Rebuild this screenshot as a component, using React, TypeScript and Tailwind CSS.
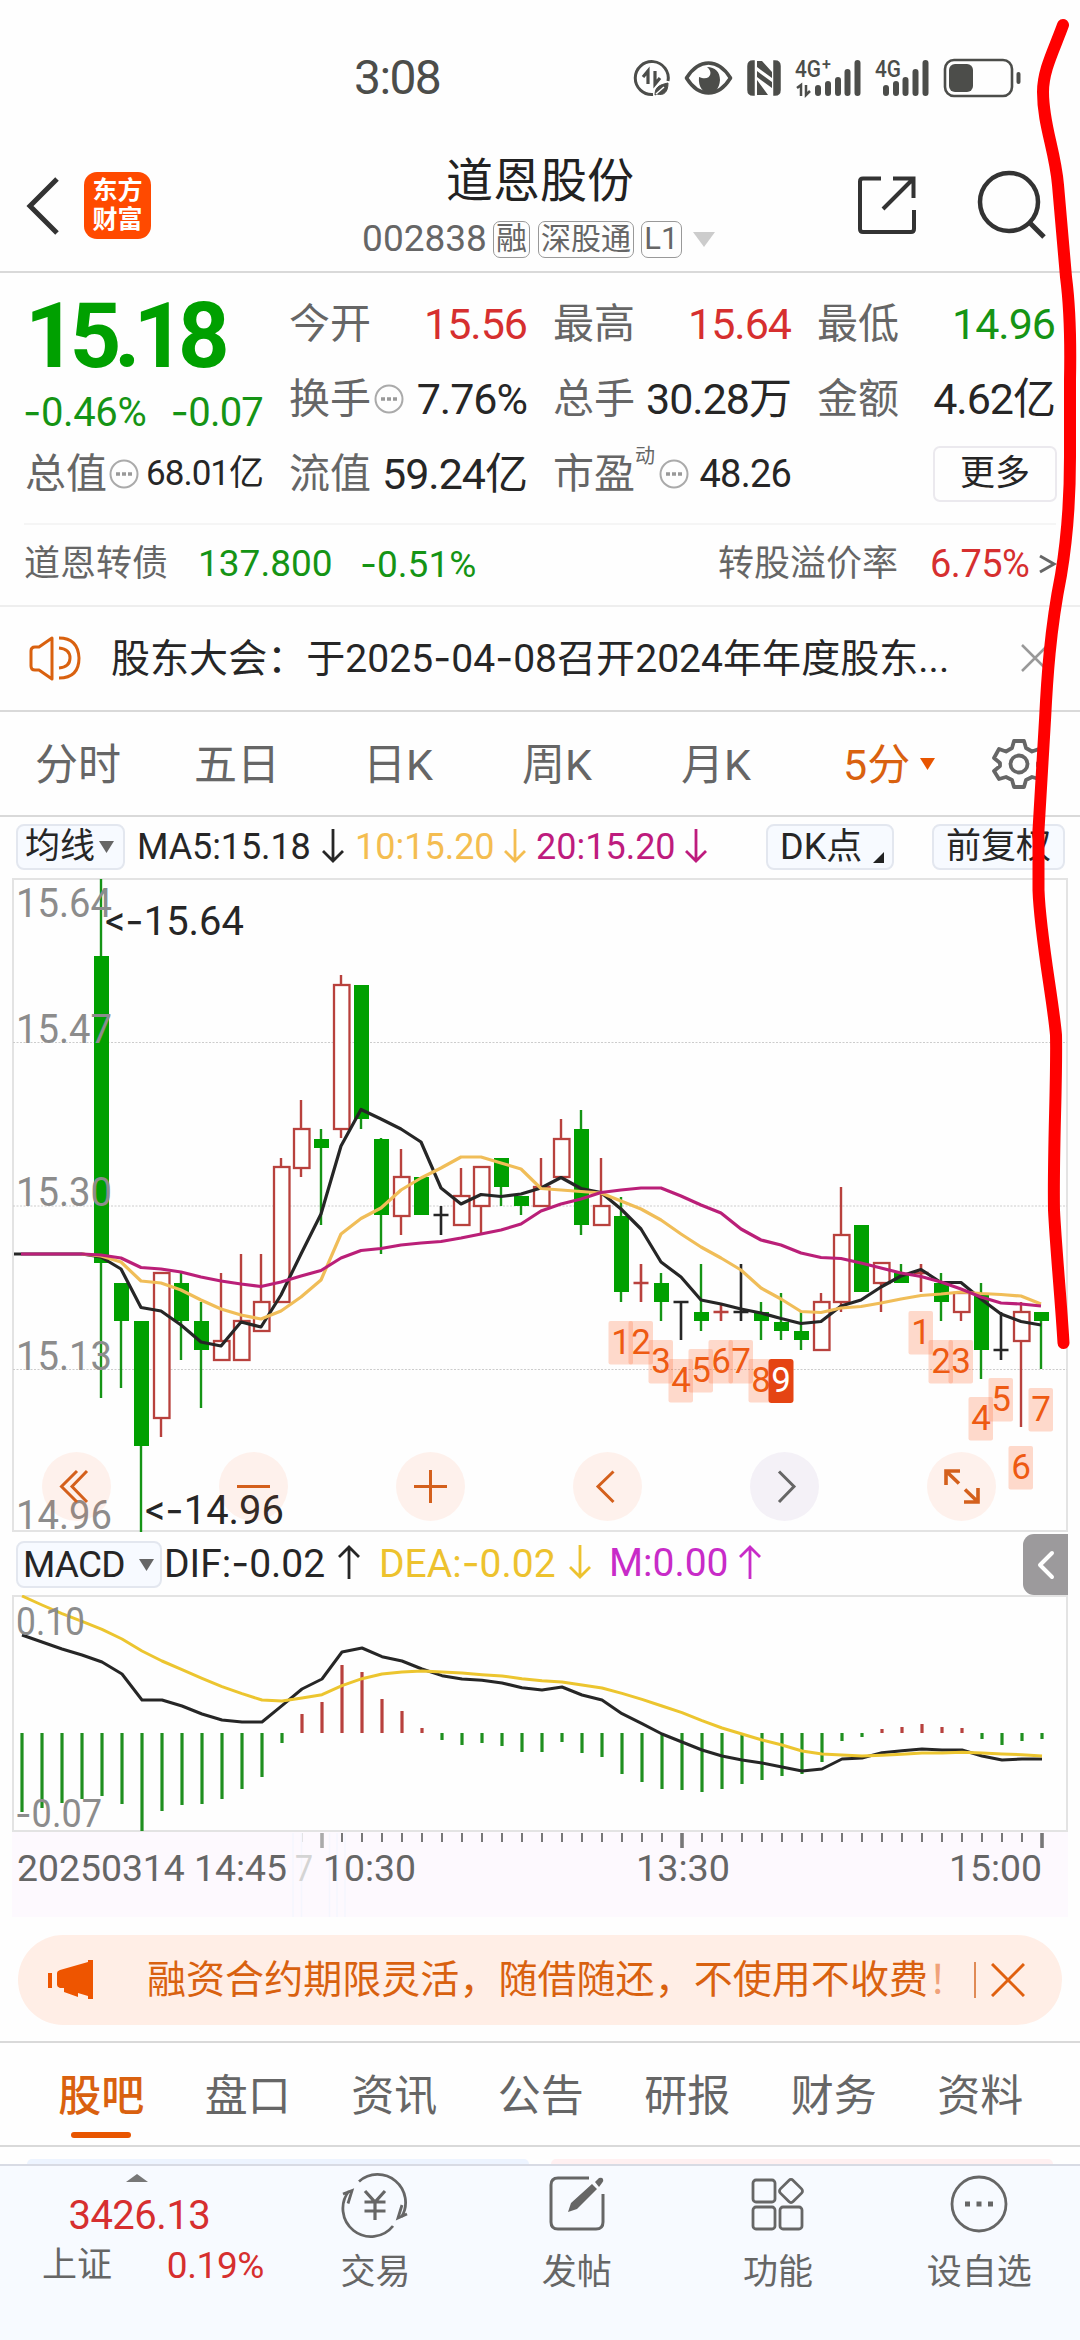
import React from 'react';

type Pt = [number, number];
type Kind = 'G' | 'R' | 'K';
type Candle = [Kind, number, number, number, number];

const GREEN = '#00a000';
const RED = '#b8413d';
const INK = '#262626';

// kind, body top, body bottom, high, low
const candles: Candle[] = [
  ['G', 956, 1263, 879, 1398], ['G', 1283, 1321, 1283, 1388], ['G', 1321, 1446, 1321, 1532], ['R', 1273, 1418, 1273, 1437],
  ['G', 1283, 1321, 1273, 1360], ['G', 1321, 1350, 1302, 1408], ['R', 1341, 1360, 1273, 1360], ['R', 1321, 1360, 1254, 1360],
  ['R', 1302, 1331, 1254, 1331], ['R', 1167, 1302, 1158, 1302], ['R', 1129, 1168, 1100, 1177], ['G', 1139, 1148, 1129, 1225],
  ['R', 985, 1129, 975, 1138], ['G', 985, 1119, 985, 1129], ['G', 1139, 1215, 1138, 1254], ['R', 1177, 1216, 1149, 1235],
  ['G', 1177, 1215, 1177, 1215], ['K', 1215, 1215, 1206, 1235], ['R', 1196, 1225, 1168, 1225], ['R', 1167, 1206, 1167, 1233],
  ['G', 1158, 1187, 1158, 1206], ['G', 1196, 1206, 1196, 1215], ['R', 1187, 1206, 1158, 1206], ['R', 1139, 1177, 1119, 1177],
  ['G', 1129, 1225, 1110, 1235], ['R', 1206, 1225, 1158, 1225], ['G', 1216, 1292, 1197, 1302], ['R', 1283, 1283, 1264, 1302],
  ['G', 1283, 1302, 1273, 1321], ['K', 1302, 1302, 1302, 1340], ['G', 1312, 1321, 1264, 1331], ['R', 1312, 1312, 1304, 1321],
  ['K', 1312, 1312, 1264, 1321], ['G', 1312, 1321, 1302, 1340], ['G', 1322, 1331, 1293, 1340], ['G', 1331, 1340, 1312, 1350],
  ['R', 1302, 1350, 1293, 1350], ['R', 1235, 1302, 1187, 1312], ['G', 1225, 1292, 1225, 1292], ['R', 1263, 1283, 1263, 1312],
  ['G', 1273, 1283, 1264, 1283], ['R', 1273, 1273, 1264, 1292], ['G', 1283, 1302, 1273, 1321], ['R', 1293, 1312, 1293, 1321],
  ['G', 1293, 1350, 1283, 1379], ['K', 1350, 1350, 1312, 1360], ['R', 1312, 1341, 1302, 1427], ['G', 1312, 1321, 1312, 1369],
];

const ma5 = [
  1257, 1269, 1307.5, 1311, 1325, 1342, 1346, 1322, 1327, 1295, 1254, 1214, 1146, 1109.5, 1119, 1129, 1142, 1188, 1204, 1194.5,
  1196.5, 1194, 1188, 1177.5, 1188.5, 1192.5, 1209, 1229, 1262, 1277, 1300, 1304, 1309, 1313, 1318.5, 1323.5, 1321.5, 1306,
  1300, 1287, 1276, 1269.5, 1282.5, 1282.5, 1299, 1314, 1321.5, 1325,
];
const ma10 = [
  1256, 1262, 1281, 1283, 1290, 1300, 1309, 1315, 1319, 1311, 1297, 1280, 1234, 1218.5, 1208, 1190, 1178, 1168, 1157, 1157,
  1163, 1169, 1188.5, 1190, 1191.5, 1193, 1201, 1209, 1220, 1234, 1247, 1258, 1270, 1288, 1299, 1311.5, 1312.5, 1308, 1306.5,
  1303, 1299, 1295.5, 1294, 1292, 1293.5, 1294.5, 1296, 1304,
];
const ma20 = [
  1255, 1258, 1267.5, 1269, 1272, 1277, 1281, 1284, 1286.5, 1282, 1276, 1270.5, 1258, 1250.5, 1248.5, 1245, 1243, 1241.5,
  1238, 1234, 1230, 1224, 1211, 1204, 1199, 1192.5, 1190, 1188, 1188, 1196, 1205, 1213, 1229, 1240, 1245, 1253, 1257.5,
  1258.5, 1263, 1268, 1273, 1276.5, 1282, 1289, 1297, 1303, 1304, 1306,
];

const line = (ys: number[], x0: number, start: Pt[] = []) =>
  [...start, ...ys.map((y, i): Pt => [x0 + i * 20, y])].map((p) => p.join(',')).join(' ');

const marks: [string, number, number][] = [
  ['1', 621, 1321], ['2', 641, 1321], ['3', 661, 1340], ['4', 681, 1359], ['5', 701, 1349], ['6', 721, 1340], ['7', 741, 1340],
  ['8', 761, 1359], ['1', 921, 1311], ['2', 941, 1340], ['3', 961, 1340], ['4', 981, 1397], ['5', 1001, 1378], ['6', 1021, 1446],
  ['7', 1041, 1388],
];

const macdEnds = [
  1812, 1808, 1803, 1799, 1796, 1804, 1831, 1811, 1805, 1804, 1799, 1789, 1777, 1743, 1714, 1702, 1665, 1672, 1699, 1711, 1728,
  1740, 1745, 1743, 1746, 1752, 1752, 1742, 1753, 1757, 1774, 1782, 1789, 1790, 1792, 1789, 1784, 1780, 1776, 1774, 1762, 1741,
  1737, 1729, 1727, 1724, 1727, 1728, 1739, 1745, 1741, 1739,
];
const dif = [
  345, 366, 387, 405, 426, 462, 540, 540, 558, 582, 600, 606, 606, 557, 507, 477, 396, 384, 410, 423, 447, 467, 477, 481, 489,
  503, 510, 501, 525, 540, 581, 611, 642, 666, 690, 708, 720, 729, 741, 753, 747, 717, 714, 698, 692, 687, 690, 690, 708, 720,
  717, 717,
].map((v) => 1520 + v / 3);
const dea = [
  228, 255, 281, 304, 328, 357, 393, 423, 449, 475, 500, 521, 540, 543, 534, 524, 497, 476, 462, 456, 453, 456, 459, 464, 468,
  476, 482, 486, 495, 504, 520, 538, 558, 578, 602, 624, 642, 660, 675, 693, 702, 705, 708, 706, 703, 699, 699, 697, 699, 702,
  704, 708,
].map((v) => 1520 + v / 3);

// Hyphens are set in Inter, whose dash is wider and sits higher than Roboto's.
function Num({ children }: { children: string }) {
  return (
    <>
      {children.split(/(-)/).map((part, i) => (part === '-' ? <span key={i} className="font-[Inter]">-</span> : part))}
    </>
  );
}

function Label({ x, y, w, size = 40, fill = '#8c8c8c', children }: { x: number; y: number; w: number; size?: number; fill?: string; children: string }) {
  return (
    <text x={x} y={y} textLength={w} lengthAdjust="spacingAndGlyphs" fontSize={size} fill={fill}>
      {children.split(/(-)/).map((part, i) => (part === '-' ? <tspan key={i} className="font-[Inter]">-</tspan> : part))}
    </text>
  );
}

function StatusBar() {
  return (
    <div className="flex h-[104px] items-end pb-1 text-[#4c4d4a]">
      <span className="ml-[354px] h-[46px] w-[88px] text-[48px] leading-[48px] tracking-[-1.6px] whitespace-nowrap">3:08</span>
      <svg className="ml-[190px] h-[44px] w-[392px]" viewBox="632 56 392 44" fill="none" stroke="#4c4d4a">
        <path d="M668 81A16.5 16.5 0 1 0 653 94.500" strokeWidth="3" />
        <path d="M643 77l5-6v13M655 71v13l5-6" strokeWidth="3.200" />
        <path d="M655 95c0-8 4-10 13-12 0 9-4 13-11 11z" fill="#4c4d4a" strokeWidth="1" />
        <path d="M656 94l8-7" stroke="#fff" strokeWidth="1.500" />
        <path d="M686.500 78C699 58 718 58 730.500 78 718 98 699 98 686.500 78z" strokeWidth="3.600" strokeLinejoin="round" />
        <path d="M707 67c7 5 3 15-8 10-2 20 20 22 21 3 0-8-5-13-13-13z" fill="#4c4d4a" stroke="none" />
        <path d="M754 61h-1q-5 0-5 5v24q0 5 5 5h1zM774 61h1q5 0 5 5v24q0 5-5 5h-1z" fill="#4c4d4a" strokeWidth="1.500" />
        <path d="M757 61h5l10 11v6l-15-11zM757 71l15 11v6l-15-11zM757 80l11 15h-11z" fill="#4c4d4a" stroke="none" />
        <g fill="#4c4d4a" stroke="none" fontSize="23" fontWeight="500">
          <text x="795" y="77" textLength="26" lengthAdjust="spacingAndGlyphs">4G</text>
          <text x="822" y="70" fontSize="16">+</text>
          <text x="875" y="77" textLength="26" lengthAdjust="spacingAndGlyphs">4G</text>
        </g>
        <path d="M797 88l4-3v11M806 85v10l4-4" strokeWidth="2.500" />
        <path d="M818 88v5M828 84v9M838 80v13M847.500 72v21M857.500 63v30M886 88v5M896 84v9M905.500 80v13M915.500 72v21M925.500 63v30" strokeWidth="6" strokeLinecap="round" />
        <rect x="945" y="60" width="67" height="36" rx="9" strokeWidth="2.600" />
        <rect x="949" y="64" width="24" height="28" rx="6" fill="#4c4d4a" stroke="none" />
        <path d="M1018.500 74v8" strokeWidth="4" strokeLinecap="round" />
      </svg>
    </div>
  );
}

function Header() {
  return (
    <header className="relative flex h-[169px] items-start justify-between border-b-2 border-[#d9d9d9] pl-[24px] pr-[33px]">
      <div className="flex items-center pt-[67px]">
        <svg className="h-[68px] w-[40px]" viewBox="0 0 40 68" fill="none" stroke="#333" strokeWidth="5">
          <path d="M33 8L6 35l27 27" />
        </svg>
        <div className="ml-[20px] flex size-[67px] flex-col items-center justify-center rounded-[13px] bg-[#ff4a00] text-[25px] leading-[29px] font-bold text-white">
          <span>东方</span>
          <span>财富</span>
        </div>
      </div>
      <div className="absolute top-[49px] left-1/2 flex w-[420px] -translate-x-1/2 flex-col items-center">
        <h1 className="text-[47px] leading-[56px] text-[#222]">道恩股份</h1>
        <div className="mt-[10px] ml-[-3px] flex items-center text-[#666]">
          <span className="text-[37px] leading-[40px]">002838</span>
          <span className="ml-[6px] flex h-[37px] items-center rounded-[7px] border-[1.5px] border-[#999] px-[2px] text-[31px] leading-[32px]">融</span>
          <span className="ml-[8px] flex h-[37px] items-center rounded-[7px] border-[1.5px] border-[#999] px-[2px] text-[30px] leading-[32px]">深股通</span>
          <span className="ml-[7px] flex h-[37px] w-[41px] items-center justify-center rounded-[7px] border-[1.5px] border-[#999] text-[31px] leading-[32px]">L1</span>
          <svg className="ml-[11px] h-[15px] w-[22px]" viewBox="0 0 22 15"><path d="M0 0h22L11 15z" fill="#ccc" /></svg>
        </div>
      </div>
      <svg className="mt-[70px] h-[66px] w-[190px] overflow-visible" viewBox="857 174 190 66" fill="none" stroke="#333" strokeWidth="4">
        <path d="M881 178.500H863q-3 0-3 3V229q0 3 3 3h48q3 0 3-3v-19M893 178.500h20.500V198M913 179l-30 30" />
        <circle cx="1009" cy="202" r="29" strokeWidth="4.500" />
        <path d="M1030 223l14 14" strokeWidth="5" />
      </svg>
    </header>
  );
}

function Dots({ className = '' }: { className?: string }) {
  return (
    <svg className={`size-[30px] ${className}`} viewBox="0 0 30 30">
      <circle cx="15" cy="15" r="13.500" fill="none" stroke="#aaa" strokeWidth="2" />
      <path d="M7 15h4M13 15h4M19 15h4" stroke="#999" strokeWidth="3.500" />
    </svg>
  );
}

function Cell({ label, value, color, extra }: { label: string; value: string; color: string; extra?: React.ReactNode }) {
  return (
    <div className="flex h-[75px] items-center justify-between whitespace-nowrap">
      <span className="flex items-center text-[41px] leading-[50px] text-[#666]">{label}{extra}</span>
      <span className={`text-[43px] leading-[50px] tracking-[-1px] ${color}`}>{value}</span>
    </div>
  );
}

function Stats() {
  return (
    <section>
      <div className="grid h-[250px] grid-cols-4 gap-x-[26px] px-[25px] pt-[13px]">
        <div className="whitespace-nowrap">
          <div className="flex h-[102px] items-center text-[90px] leading-[90px] font-bold tracking-[-7px] text-[#00a000]">15.18</div>
          <div className="flex h-[48px] items-center justify-between text-[40px] leading-[44px] text-[#159415]">
            <span className="ml-[-2px] tracking-[-0.4px]"><Num>-0.46%</Num></span>
            <span className="tracking-[-0.8px]"><Num>-0.07</Num></span>
          </div>
          <div className="flex h-[75px] items-center justify-between">
            <span className="flex items-center text-[41px] leading-[50px] text-[#666]">总值<Dots className="ml-[2px]" /></span>
            <span className="text-[35px] leading-[50px] tracking-[-1px] text-[#262626]">68.01亿</span>
          </div>
        </div>
        <div>
          <Cell label="今开" value="15.56" color="text-[#d62f2f]" />
          <Cell label="换手" value="7.76%" color="text-[#262626]" extra={<Dots className="ml-[3px]" />} />
          <Cell label="流值" value="59.24亿" color="text-[#262626]" />
        </div>
        <div>
          <Cell label="最高" value="15.64" color="text-[#d62f2f]" />
          <Cell label="总手" value="30.28万" color="text-[#262626]" />
          <div className="flex h-[75px] items-center justify-between whitespace-nowrap">
            <span className="flex items-center text-[41px] leading-[50px] text-[#666]">
              市盈<span className="-mt-[36px] text-[20px] leading-[20px]">动</span><Dots className="ml-[4px]" />
            </span>
            <span className="text-[38px] leading-[50px] tracking-[-0.8px] text-[#262626]">48.26</span>
          </div>
        </div>
        <div>
          <Cell label="最低" value="14.96" color="text-[#159415]" />
          <Cell label="金额" value="4.62亿" color="text-[#262626]" />
          <div className="-mr-[2px] flex h-[75px] items-center justify-end">
            <button className="flex h-[56px] w-[124px] items-center justify-center rounded-[7px] border-2 border-[#ebe9ee] text-[35px] leading-[40px] text-[#262626]">更多</button>
          </div>
        </div>
      </div>
      <div className="mx-[24px] h-[2px] bg-[#f5f5f5]" />
      <div className="flex h-[82px] items-center border-b-2 border-[#eeeeee] pr-[23px] pb-[2px] pl-[24px] text-[36px] leading-[44px] whitespace-nowrap">
        <span className="text-[#666]">道恩转债</span>
        <span className="ml-[30px] w-[162px] text-[37px] text-[#159415]">137.800</span>
        <span className="text-[37px] text-[#159415]"><Num>-0.51%</Num></span>
        <span className="ml-auto text-[#666]">转股溢价率</span>
        <span className="ml-[32px] w-[108px] text-[38px] tracking-[-0.5px] text-[#d62f2f]">6.75%</span>
        <svg className="h-[24px] w-[19px]" viewBox="0 0 19 24" fill="none" stroke="#666" strokeWidth="3"><path d="M2 4l14 8-14 8" /></svg>
      </div>
    </section>
  );
}

function Notice() {
  return (
    <section className="flex h-[105px] items-center border-b-2 border-[#d9d9d9] pb-[2px] pl-[28px]">
      <svg className="h-[50px] w-[54px]" viewBox="28 634 54 50" fill="none" stroke="#d9610f" strokeWidth="3">
        <path d="M52 639v41l-13-9h-4q-4 0-4-4v-15q0-4 4-4h4z" strokeLinejoin="round" />
        <path d="M59 639q19 0 20 20 0 20-20 20M59 649q11 1 11 10t-11 10" />
      </svg>
      <p className="mt-[2px] ml-[29px] w-[838px] text-[39px] leading-[50px] tracking-[0.05px] whitespace-nowrap text-[#262626]"><Num>股东大会：于2025-04-08召开2024年年度股东...</Num></p>
      <svg className="ml-[71px] size-[30px]" viewBox="0 0 30 30" stroke="#999" strokeWidth="2.500"><path d="M2 2l26 26M28 2L2 28" /></svg>
    </section>
  );
}

function PeriodTabs() {
  return (
    <nav className="flex h-[105px] items-center border-b-2 border-[#d9d9d9] text-[43px] leading-[50px] whitespace-nowrap text-[#666]">
      <span className="mt-[3px] ml-[35px] w-[159px]">分时</span>
      <span className="mt-[3px] w-[169px]">五日</span>
      <span className="mt-[3px] w-[159px]">日K</span>
      <span className="mt-[3px] w-[159px]">周K</span>
      <span className="mt-[3px] w-[162px]">月K</span>
      <span className="mt-[3px] flex w-[149px] items-center text-[#d9610f]">
        5分
        <svg className="-mt-[2px] ml-[10px] h-[12px] w-[15px]" viewBox="0 0 15 12"><path d="M0 0h15L7.500 12z" fill="#e85500" /></svg>
      </span>
      <svg className="h-[54px] w-[54px]" viewBox="-27 -27 54 54" fill="none" stroke="#666" strokeWidth="3.800" strokeLinejoin="round">
        <path d="M-5-23H5L7-16 13-12.500 20-15 25-6 19-1V2L25 7 20 15 13 13 7 16 5 23H-5L-7 16-13 13-20 15-25 7-19 2V-1L-25-6-20-15-13-12.500-7-16z" />
        <circle r="8.500" />
      </svg>
    </nav>
  );
}

function Arrow({ up = false, className = '' }: { up?: boolean; className?: string }) {
  return (
    <svg className={`h-[34px] w-[22px] ${className}`} viewBox="0 0 22 34" fill="none" stroke="currentColor" strokeWidth="2.800">
      <path d={up ? 'M11 34V2M1 12L11 2l10 10' : 'M11 0v32M1 22l10 10 10-10'} />
    </svg>
  );
}

function Caret() {
  return <svg className="h-[12px] w-[15px]" viewBox="0 0 15 12"><path d="M0 0h15L7.500 12z" fill="#666" /></svg>;
}

function MaBar() {
  return (
    <div className="flex h-[61px] items-start pt-[7px] pl-[16px] text-[36px] leading-[46px] whitespace-nowrap">
      <div className="flex h-[46px] w-[109px] items-center rounded-[8px] border-2 border-[#e3e7ef] bg-[#f7faff] pl-[7px] text-[35px] text-[#262626]">
        均线<span className="ml-[4px]"><Caret /></span>
      </div>
      <span className="ml-[12px] h-[46px] w-[185px] tracking-[-0.1px] text-[#262626]">MA5:15.18</span>
      <Arrow className="mt-[5px] text-[#262626]" />
      <span className="ml-[11px] w-[149px] text-[#f4bd50]">10:15.20</span>
      <Arrow className="mt-[5px] text-[#f4bd50]" />
      <span className="ml-[10px] w-[149px] text-[#be1b7d]">20:15.20</span>
      <Arrow className="mt-[5px] text-[#be1b7d]" />
      <div className="ml-[59px] flex h-[46px] w-[128px] items-center rounded-[8px] border-2 border-[#e3e7ef] bg-[#f7faff] pl-[12px] text-[36px] text-[#262626]">
        DK点
        <svg className="mt-[20px] ml-[11px] size-[11px]" viewBox="0 0 11 11"><path d="M11 0v11H0z" fill="#222" /></svg>
      </div>
      <div className="ml-[38px] flex h-[46px] w-[133px] items-center justify-center rounded-[8px] border-2 border-[#e3e7ef] bg-[#f7faff] text-[35px] text-[#262626]">前复权</div>
    </div>
  );
}

function CandleChart() {
  return (
    <svg className="block h-[654px] w-full overflow-visible" viewBox="0 878 1080 654">
      <rect x="13" y="879" width="1054" height="652" fill="none" stroke="#e3e3e3" strokeWidth="2" />
      {[1042.5, 1206, 1369.5].map((y) => (
        <path key={y} d={`M13 ${y}H1067`} stroke="#ccc" strokeWidth="1" strokeDasharray="2 1.500" />
      ))}
      {candles.map(([k, top, bottom, hi, lo], i) => {
        const x = 101 + i * 20;
        const color = k === 'G' ? '#159415' : k === 'R' ? RED : INK;
        if (top === bottom) {
          return <path key={i} d={`M${x - 7.5} ${top}h15M${x} ${hi}V${lo}`} stroke={color} strokeWidth="2.600" />;
        }
        return (
          <g key={i}>
            {hi < top && <path d={`M${x} ${hi}V${top}`} stroke={color} strokeWidth="2.400" />}
            {lo > bottom && <path d={`M${x} ${bottom}V${lo}`} stroke={color} strokeWidth="2.400" />}
            {k === 'G' ? (
              <rect x={x - 7} y={top} width="15" height={bottom - top} fill={GREEN} />
            ) : (
              <rect x={x - 7} y={top} width="15.500" height={bottom - top} fill="#fff" stroke={RED} strokeWidth="2.300" />
            )}
          </g>
        );
      })}
      <g fill="none" strokeWidth="3.200" strokeLinejoin="round">
        <polyline points={line(ma5, 101, [[14, 1254], [82, 1254]])} stroke={INK} />
        <polyline points={line(ma10, 101, [[82, 1254]])} stroke="#f0bd58" />
        <polyline points={line(ma20, 101, [[21, 1254], [82, 1254]])} stroke="#ba1f78" />
      </g>
      <Label x={16} y={917} w={96}>15.64</Label>
      <Label x={16} y={1043} w={96}>15.47</Label>
      <Label x={16} y={1206} w={96}>15.30</Label>
      <Label x={16} y={1370} w={96}>15.13</Label>
      <Label x={16} y={1529} w={96}>14.96</Label>
      <Label x={105} y={935} w={139} fill={INK}>{'<-15.64'}</Label>
      <Label x={145} y={1524} w={139} fill={INK}>{'<-14.96'}</Label>
      {marks.map(([t, x, y]) => (
        <g key={`${x}`}>
          <rect x={x - 12.5} y={y} width="24.500" height="43.500" rx="2" fill="#ff6a35" fillOpacity="0.25" />
          <text x={x} y={y + 33} textAnchor="middle" fontSize="35" fill="#ee5a12">{t}</text>
        </g>
      ))}
      <rect x="768.500" y="1359" width="25" height="44" rx="3" fill="#e54413" />
      <text x="781" y="1392" textAnchor="middle" fontSize="35" fill="#fff">9</text>
      {[76.5, 253.5, 430.5, 607.5, 784.5, 961.5].map((x, i) => (
        <circle key={x} cx={x} cy="1486.500" r="34.500" fill={i === 4 ? '#5a2a80' : '#ff5a14'} fillOpacity={i === 4 ? 0.06 : 0.08} />
      ))}
      <g fill="none" stroke="#d4601c" strokeWidth="3">
        <path d="M77 1471l-15.500 15.500 15.500 15.500M87 1471l-15 15.500 15 15.500M237 1486.500h33M414 1486.500h33M430.500 1470v33M613.500 1471.500l-15.500 15 15.500 15.500" />
        <path d="M946 1485v-14h14M947 1472l12 11.500M978 1488v14h-14M977 1501l-12-11.500" strokeWidth="3.600" />
        <path d="M779 1471.500l15 15-15 15.500" stroke="#666" />
      </g>
    </svg>
  );
}

function MacdBar() {
  return (
    <div className="flex h-[63px] items-start pl-[16px] text-[39px] leading-[46px] whitespace-nowrap">
      <div className="mt-[9px] flex h-[47px] w-[146px] items-center justify-between rounded-[8px] border-2 border-[#e3e7ef] bg-[#f7faff] pr-[6px] pl-[5px] text-[37px] tracking-[-0.8px] text-[#262626]">
        MACD<Caret />
      </div>
      <span className="mt-[8px] ml-[2px] w-[174px] text-[#262626]"><Num>DIF:-0.02</Num></span>
      <Arrow up className="mt-[13px] text-[#262626]" />
      <span className="mt-[8px] ml-[19px] w-[190px] text-[#edc22e]"><Num>DEA:-0.02</Num></span>
      <Arrow className="mt-[13px] text-[#edc22e]" />
      <span className="mt-[8px] ml-[18px] w-[130px] text-[#c82bc8]">M:0.00</span>
      <Arrow up className="mt-[13px] text-[#c82bc8]" />
      <div className="mt-[2px] mr-[12px] ml-auto flex h-[61px] w-[45px] items-center justify-center rounded-l-[11px] bg-[#9c9a9c]">
        <svg className="h-[30px] w-[18px]" viewBox="0 0 18 30" fill="none" stroke="#fff" strokeWidth="4" strokeLinecap="round" strokeLinejoin="round"><path d="M15 3L3 15l12 12" /></svg>
      </div>
    </div>
  );
}

function MacdChart() {
  return (
    <svg className="block h-[322px] w-full" viewBox="0 1595 1080 322">
      <rect x="12" y="1832" width="1056" height="85" fill="#fdf9fe" />
      <rect x="13" y="1596" width="1054" height="235" fill="none" stroke="#e3e3e3" strokeWidth="2" />
      {macdEnds.map((y, i) => (
        <path key={i} d={`M${22 + i * 20} 1733V${y}`} stroke={y < 1733 ? RED : '#1f8f1f'} strokeWidth="3.200" />
      ))}
      <g fill="none" strokeWidth="3" strokeLinejoin="round">
        <polyline points={line(dif, 22)} stroke={INK} />
        <polyline points={line(dea, 22)} stroke="#ecc52f" />
      </g>
      <Label x={16} y={1635} w={69} size={38}>0.10</Label>
      <Label x={15} y={1827} w={87} size={38}>-0.07</Label>
      {Array.from({ length: 38 }, (_, k) => k + 14).map((i) => {
        const long = i === 15 || i === 33 || i === 51;
        return (
          <path key={i} d={`M${22 + i * 20} 1833v${long ? 15 : 9}`} stroke={i === 14 ? '#ddd' : i === 15 ? '#aaa' : '#777'} strokeWidth={long ? 3.6 : 2} />
        );
      })}
      <path d="M293 1833v84M301.500 1833v84M329.500 1833v84M337 1833v84M345 1833v84" stroke="#f5f6fe" strokeWidth="1.500" />
      <Label x={17} y={1881} w={270} size={37} fill="#666">20250314 14:45</Label>
      <Label x={295} y={1881} w={18} size={37} fill="#d4d4d4">7</Label>
      <Label x={323} y={1881} w={93} size={37} fill="#666">10:30</Label>
      <Label x={636} y={1881} w={94} size={37} fill="#666">13:30</Label>
      <Label x={949} y={1881} w={93} size={37} fill="#666">15:00</Label>
    </svg>
  );
}

function Banner() {
  return (
    <div className="flex h-[126px] items-start border-b-2 border-[#d9d9d9] px-[18px] pt-[18px]">
      <div className="flex h-[90px] w-full items-center rounded-full bg-[#ffeee6] pl-[30px] whitespace-nowrap text-[#d9610f]">
        <svg className="h-[42px] w-[46px]" viewBox="48 1959 46 42" fill="#ee5500">
          <path d="M48 1973h4v15h-4zM57 1973q0-2 3-3l28-8v-2h5v39h-5v-3l-10-3v4l-14-5v-4h-4q-3-1-3-3z" />
        </svg>
        <p className="ml-[53px] w-[827px] text-[39px] leading-[50px] tracking-[0.05px]">融资合约期限灵活，随借随还，不使用不收费<span className="text-[#f0a27a]">！</span></p>
        <span className="h-[36px] w-[2px] bg-[#e08a55]" />
        <svg className="ml-[15px] size-[34px]" viewBox="0 0 34 34" stroke="#e0600f" strokeWidth="3"><path d="M1 1l32 32M33 1L1 33" /></svg>
      </div>
    </div>
  );
}

function SectionTabs() {
  return (
    <nav className="flex h-[104px] border-b-2 border-[#d9d9d9] pl-[28px] text-[43px] leading-[50px] text-[#666]">
      {['股吧', '盘口', '资讯', '公告', '研报', '财务', '资料'].map((t, i) => (
        <div key={t} className={`flex w-[146.5px] flex-col items-center pt-[28px] ${i === 0 ? 'font-medium text-[#d9610f]' : ''}`}>
          <span>{t}</span>
          {i === 0 && <span className="mt-[11px] h-[6px] w-[60px] rounded-full bg-[#e85500]" />}
        </div>
      ))}
    </nav>
  );
}

function NavItem({ label, children }: { label: string; children: React.ReactNode }) {
  return (
    <div className="flex w-[201.5px] flex-col items-center pt-[3px]">
      <svg className="size-[70px]" viewBox="-35 -35 70 70" fill="none" stroke="#666" strokeWidth="2.800">{children}</svg>
      <span className="mt-[12px] text-[35px] leading-[44px] text-[#666]">{label}</span>
    </div>
  );
}

function BottomBar() {
  return (
    <footer className="flex h-[176px] border-t-2 border-[#d8dbe4] bg-[#f7faff]">
      <div className="flex w-[275px] flex-col items-center pt-[8px]">
        <svg className="h-[8px] w-[22px]" viewBox="0 0 22 8"><path d="M0 8h22L11 0z" fill="#777" /></svg>
        <span className="mt-[12px] ml-[4px] text-[40px] leading-[44px] tracking-[-0.5px] text-[#d62f2f]">3426.13</span>
        <div className="mt-[6px] ml-[42px] flex w-[222px] items-center justify-between self-start text-[35px] leading-[44px]">
          <span className="text-[#666]">上证</span>
          <span className="text-[37px] tracking-[-0.4px] text-[#d62f2f]">0.19%</span>
        </div>
      </div>
      <NavItem label="交易">
        <path d="M-16-22.500A28 28 0 0 1 26.500 13M-26-13A28 28 0 0 0 18 22M-32-10l9-3.500-4 13M32 10l-9 4 4-13" />
        <path d="M-10-13L0-2l10-11M0-2v18M-10.500-2h21M-10.500 7h21" strokeWidth="3.200" />
      </NavItem>
      <NavItem label="发帖">
        <path d="M12-26H-19q-7 0-7 7V18q0 7 7 7h38q7 0 7-7V-10" strokeWidth="3" />
        <path d="M-9 8l3-9 21-19 5 5-20 20zM18-22l4-4q3-1 4 1t-1 4l-3 4z" fill="#666" stroke="none" />
      </NavItem>
      <NavItem label="功能">
        <rect x="-25" y="-24" width="22" height="22" rx="3" />
        <rect x="-25" y="3" width="22" height="22" rx="3" />
        <rect x="2" y="3" width="22" height="22" rx="3" />
        <rect x="4" y="-22" width="18" height="18" rx="3" transform="rotate(45 13 -13)" />
      </NavItem>
      <NavItem label="设自选">
        <circle r="27" />
        <path d="M-14 0h5M-2.500 0h5M9 0h5" strokeWidth="5" />
      </NavItem>
    </footer>
  );
}

export default function App() {
  return (
    <div className="relative h-[2340px] w-[1080px] overflow-hidden bg-[#fefefe] font-[Roboto,'Noto_Sans_CJK_SC',sans-serif]">
      <StatusBar />
      <Header />
      <Stats />
      <Notice />
      <PeriodTabs />
      <MaBar />
      <CandleChart />
      <MacdBar />
      <MacdChart />
      <Banner />
      <SectionTabs />
      <div className="flex h-[17px] items-end gap-[22px] px-[27px]">
        <div className="h-[5px] flex-1 rounded-t-[5px] bg-[#edf4ff]" />
        <div className="h-[5px] flex-1 rounded-t-[5px] bg-[#fff0f1]" />
      </div>
      <BottomBar />
      <svg className="pointer-events-none absolute top-0 left-0 h-[2340px] w-[1080px]" viewBox="0 0 1080 2340" fill="none">
        <path
          d="M1063 25C1054 50 1043 70 1043 92C1043 125 1055 150 1058 185L1066 277C1069 300 1071 330 1070 380V457C1070 510 1066 545 1061 575C1050 630 1047 680 1045 720L1038.500 830V890C1040 935 1053 1000 1056 1035C1057 1080 1053 1150 1054 1210C1056 1250 1061 1300 1063.500 1343"
          stroke="#ff0000" strokeWidth="12" strokeLinecap="round" strokeLinejoin="round"
        />
      </svg>
    </div>
  );
}
